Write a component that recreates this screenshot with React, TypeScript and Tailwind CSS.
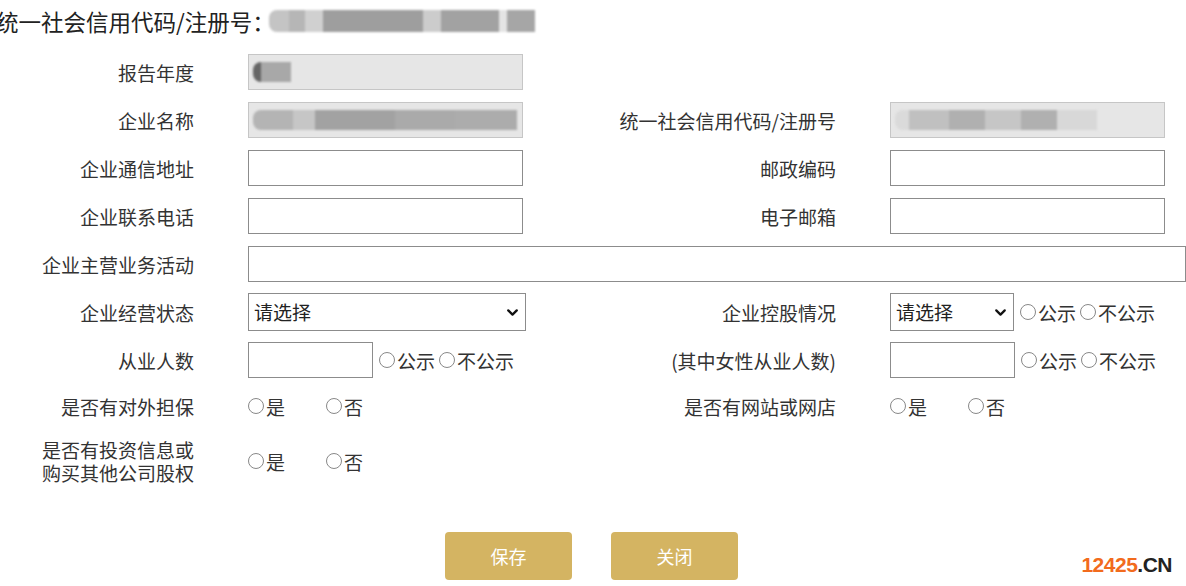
import React from 'react';
import { ChevronDown } from 'lucide-react';

const font = { fontFamily: '"Microsoft YaHei", "Noto Sans CJK SC", sans-serif' };

function Label({ children, className = '' }: { children: React.ReactNode; className?: string }) {
  return <div className={`shrink-0 text-right text-[19px] leading-[23px] text-[#333] ${className}`}>{children}</div>;
}

function TextBox({ width = 'w-[275px]' }: { width?: string }) {
  return <div className={`h-[36px] shrink-0 ${width} border border-[#8c8c8c] bg-white`} />;
}

// 模糊处理过的只读字段
function BlurBox({ segs }: { segs: string[] }) {
  return (
    <div className="flex h-[36px] w-[275px] items-center border border-[#c6c6c6] bg-[#e6e6e6] px-[4px]">
      <div className="flex h-[20px] overflow-hidden rounded-l-[8px] blur-[1px]">
        {segs.map((c, i) => (
          <div key={i} className={`h-full ${c}`} />
        ))}
      </div>
    </div>
  );
}

function Radio({ text, className = '' }: { text: string; className?: string }) {
  return (
    <span className={`flex shrink-0 items-center text-[19px] leading-[23px] text-[#333] ${className}`}>
      <span className="mr-[2px] block size-[16px] shrink-0 rounded-full border border-[#888] bg-white" />
      {text}
    </span>
  );
}

function Publish() {
  return (
    <div className="flex items-center">
      <Radio text="公示" className="ml-[6px]" />
      <Radio text="不公示" className="ml-[4px]" />
    </div>
  );
}

function YesNo() {
  return (
    <div className="flex items-center">
      <Radio text="是" className="w-[78px]" />
      <Radio text="否" />
    </div>
  );
}

function Select({ width }: { width: string }) {
  return (
    <div className={`flex h-[38px] shrink-0 ${width} items-center justify-between border border-[#8c8c8c] bg-white pl-[5px] pr-[4px]`}>
      <span className="text-[19px] text-[#222]">请选择</span>
      <ChevronDown size={17} strokeWidth={3.2} className="text-[#111]" />
    </div>
  );
}

function Row({
  left,
  field,
  right,
  rfield,
  className = 'h-[36px]',
}: {
  left: React.ReactNode;
  field: React.ReactNode;
  right?: React.ReactNode;
  rfield?: React.ReactNode;
  className?: string;
}) {
  return (
    <div className={`flex items-center ${className}`}>
      <Label className="w-[194px]">{left}</Label>
      <div className="ml-[54px] flex w-[280px] items-center">{field}</div>
      {right && (
        <>
          <Label className="w-[308px]">{right}</Label>
          <div className="ml-[54px] flex items-center">{rfield}</div>
        </>
      )}
    </div>
  );
}

export default function App() {
  return (
    <div className="relative h-[586px] w-[1186px] overflow-hidden bg-white" style={font}>
      {/* 顶部 */}
      <div className="mt-[8px] flex h-[26px] items-center">
        <span className="-ml-[4px] shrink-0 text-[22.5px] leading-[26px] text-[#222]">统一社会信用代码/注册号：</span>
        <div className="-ml-[6px] flex h-[22px] overflow-hidden rounded-l-[8px] blur-[1px]">
          <div className="w-[20px] bg-[#c4c4c4]" />
          <div className="w-[16px] bg-[#b6b6b6]" />
          <div className="w-[18px] bg-[#d0d0d0]" />
          <div className="w-[100px] bg-[#9e9e9e]" />
          <div className="w-[18px] bg-[#cccccc]" />
          <div className="w-[58px] bg-[#a2a2a2]" />
          <div className="w-[8px] bg-[#e4e4e4]" />
          <div className="w-[28px] bg-[#a6a6a6]" />
        </div>
      </div>

      <div className="mt-[20px] flex flex-col gap-[12px]">
        <Row left="报告年度" field={<BlurBox segs={['w-[8px] bg-[#666]', 'w-[30px] bg-[#a8a8a8]']} />} />
        <Row
          left="企业名称"
          field={
            <BlurBox
              segs={[
                'w-[40px] bg-[#b4b4b4]',
                'w-[22px] bg-[#c6c6c6]',
                'w-[80px] bg-[#a2a2a2]',
                'w-[60px] bg-[#aaaaaa]',
                'w-[62px] bg-[#acacac]',
              ]}
            />
          }
          right="统一社会信用代码/注册号"
          rfield={
            <BlurBox
              segs={[
                'w-[14px] bg-[#dadada]',
                'w-[40px] bg-[#c0c0c0]',
                'w-[36px] bg-[#b0b0b0]',
                'w-[36px] bg-[#c6c6c6]',
                'w-[36px] bg-[#b0b0b0]',
                'w-[40px] bg-[#d8d8d8]',
              ]}
            />
          }
        />
        <Row left="企业通信地址" field={<TextBox />} right="邮政编码" rfield={<TextBox />} />
        <Row left="企业联系电话" field={<TextBox />} right="电子邮箱" rfield={<TextBox />} />
        <div className="flex h-[36px] items-center">
          <Label className="w-[194px]">企业主营业务活动</Label>
          <div className="ml-[54px] h-[36px] w-[960px] border border-[#8c8c8c]" />
        </div>
        <Row
          left="企业经营状态"
          field={<Select width="w-[278px]" />}
          right="企业控股情况"
          rfield={
            <>
              <Select width="w-[124px]" />
              <Publish />
            </>
          }
        />
        <Row
          left="从业人数"
          field={
            <>
              <TextBox width="w-[125px]" />
              <Publish />
            </>
          }
          right="(其中女性从业人数)"
          rfield={
            <>
              <TextBox width="w-[125px]" />
              <Publish />
            </>
          }
        />
      </div>

      <div className="mt-[16px]">
        <Row className="h-[24px]" left="是否有对外担保" field={<YesNo />} right="是否有网站或网店" rfield={<YesNo />} />
      </div>
      <div className="mt-[19px]">
        <Row
          className="h-[48px]"
          left={
            <>
              <div>是否有投资信息或</div>
              <div>购买其他公司股权</div>
            </>
          }
          field={<YesNo />}
        />
      </div>

      <div className="mt-[47px] flex gap-[39px] pl-[445px]">
        <button className="h-[48px] w-[127px] rounded-[4px] bg-[#d4b462] text-[18px] text-white">保存</button>
        <button className="h-[48px] w-[127px] rounded-[4px] bg-[#d4b462] text-[18px] text-white">关闭</button>
      </div>

      {/* 水印 */}
      <div
        className="absolute bottom-[11px] right-[14px] text-[21px] font-bold leading-none tracking-[-0.5px]"
        style={{ fontFamily: '"Liberation Sans", Arial, sans-serif' }}
      >
        <span className="text-[#f26b1d]">12425</span>
        <span className="text-[#222]">.CN</span>
      </div>
    </div>
  );
}
